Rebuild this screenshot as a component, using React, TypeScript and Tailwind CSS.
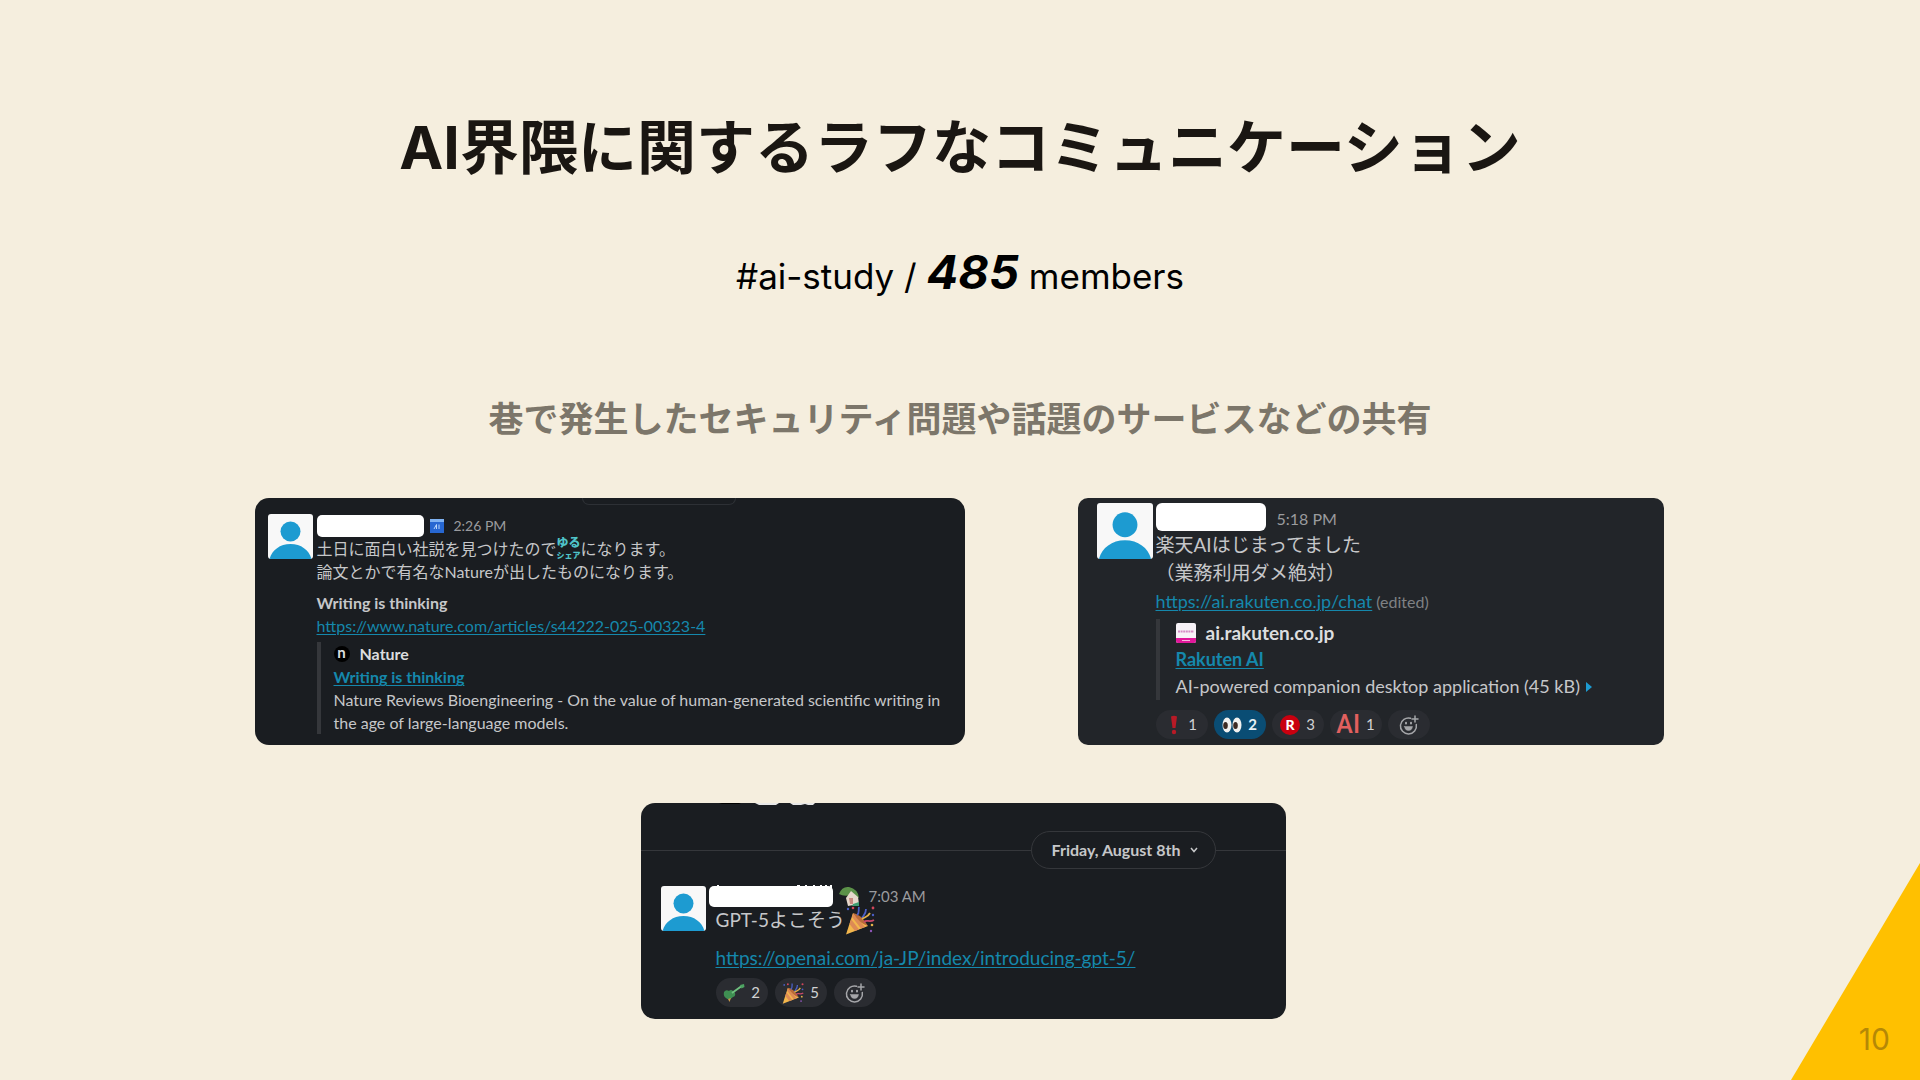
import { FC, ReactNode } from 'react';

const Avatar: FC<{ className: string }> = ({ className }) => (
  <svg viewBox="0 0 45 45" role="img" aria-label="User" className={`shrink-0 rounded-[3px] bg-[#f8f8f8] ${className}`}>
    <circle cx="22.5" cy="17.5" r="10" fill="#1d9bd1" />
    <path d="M1.5 45C4 36 12 30 22.500 30S41 36 43.500 45Z" fill="#1d9bd1" />
  </svg>
);

const PartyIcon: FC<{ className: string }> = ({ className }) => (
  <svg viewBox="0 0 30 30" aria-hidden="true" className={`shrink-0 ${className}`}>
    <path d="M8 8L23 21L1 29.500Z" fill="#f2b64c" />
    <path d="M6 14L14 24.500L10 26L4.500 19ZM8 8.500L20 22L16 23.500L7 12Z" fill="#dd8a55" />
    <path d="M8 8Q16 9 23 21Q15 19 8 8Z" fill="#b96a3a" />
    <path d="M12 10C15 8 13 5 14 2M17 13C19 10 21 9 21 4" stroke="#4a5fc4" strokeWidth="1.800" fill="none" />
    <path d="M19 17C22 14 24 18 29 15" stroke="#c9486a" strokeWidth="1.800" fill="none" />
    <path d="M17 14C20 12 23 12 25 8" stroke="#e2b04a" strokeWidth="1.800" fill="none" />
    <circle cx="8" cy="3" r="1.300" fill="#d2465b" />
    <circle cx="3" cy="4" r="1.200" fill="#4a5fc4" />
    <circle cx="28" cy="3" r="1.400" fill="#d2465b" />
    <circle cx="28" cy="10" r="1.200" fill="#4a5fc4" />
    <circle cx="27" cy="20" r="1.300" fill="#e2b04a" />
    <circle cx="26" cy="26" r="1.200" fill="#8e55b8" />
  </svg>
);

const AddReaction: FC = () => (
  <button aria-label="Add reaction" className="flex h-[29px] w-[42px] items-center justify-center rounded-full bg-[#2a2c31] text-[#a5a6a9]">
    <svg viewBox="0 0 20 20" className="size-5" fill="none" stroke="currentColor" strokeWidth="1.5" strokeLinecap="round">
      <path d="M11.500 3.200A8 8 0 1 0 17.300 9.500" />
      <path d="M16 1V7M13 4H19" />
      <path d="M5.500 11.500H13.500C13 14.500 11.500 15.500 9.500 15.500S6 14.500 5.500 11.500Z" fill="currentColor" strokeWidth="0.500" />
      <path d="M7 7.800V8.600M12 7.800V8.600" strokeWidth="2" />
    </svg>
  </button>
);

const Reaction: FC<{ label: string; count: number; active?: boolean; children: ReactNode }> = ({
  label,
  count,
  active,
  children,
}) => (
  <button
    aria-label={label}
    className={`flex h-[29px] w-[52px] items-center justify-center gap-1.5 rounded-full text-[15px] leading-none ${
      active ? 'bg-[#0a4d74] font-bold text-[#e8f0f5]' : 'bg-[#2a2c31] text-[#d1d2d3]'
    }`}
  >
    {children}
    <span>{count}</span>
  </button>
);

const link = 'text-[#1588ac] underline decoration-1 underline-offset-2';

const NatureCard: FC = () => (
  <article className="flex h-[247px] w-[710px] flex-col overflow-hidden rounded-[14px] bg-[#1a1d21] px-[13px] text-[16px] leading-[23px] text-[#c6c7c9]">
    <div className="ml-[314px] h-[7px] w-[154px] shrink-0 rounded-b-[20px] border border-t-0 border-[#2d3035]" />
    <div className="mt-[9px] flex gap-1">
      <Avatar className="size-[45px]" />
      <div>
        <div className="flex h-[23px] items-center">
          <div className="h-[22px] w-[107px] rounded-[5px] bg-white" />
          <svg viewBox="0 0 14 14" className="ml-1.5 size-3.5" aria-hidden="true">
            <rect width="14" height="14" fill="#2767d2" />
            <rect width="14" height="3" fill="#7fb2f2" />
            <path d="M4 10L6.500 5.500V10M9 5.500V10" stroke="#b9d6fb" fill="none" />
          </svg>
          <time className="ml-2.5 text-[14px] text-[#9a9b9e]">2:26 PM</time>
        </div>
        <p className="flex">
          土日に面白い社説を見つけたので
          <span className="flex h-[23px] flex-col items-center text-[12px] leading-[12px] font-black whitespace-nowrap text-[#4fc4c9]">
            <span>ゆる</span>
            <span className="text-[8px]">シェア</span>
          </span>
          になります。
        </p>
        <p>論文とかで有名なNatureが出したものになります。</p>
        <p className="mt-2 font-bold">Writing is thinking</p>
        <a href="https://www.nature.com/articles/s44222-025-00323-4" className={`block ${link}`}>
          https://www.nature.com/articles/s44222-025-00323-4
        </a>
        <blockquote className="mt-[5px] border-l-4 border-[#35373b] pl-[13px]">
          <div className="flex items-center gap-2.5 font-bold text-[#dcdddf]">
            <span className="flex size-4 items-center justify-center rounded-full bg-black pb-0.5 text-[15px]">n</span>
            Nature
          </div>
          <a href="#nature" className={`font-bold ${link}`}>
            Writing is thinking
          </a>
          <p>
            Nature Reviews Bioengineering - On the value of human-generated scientific writing in
            <br />
            the age of large-language models.
          </p>
        </blockquote>
      </div>
    </div>
  </article>
);

const RakutenCard: FC = () => (
  <article className="flex h-[247px] w-[586px] gap-[3px] overflow-hidden rounded-[10px] bg-[#222529] pt-[5px] pl-[19px] text-[19px] leading-[28px] text-[#c6c7c9]">
    <Avatar className="size-[56px]" />
    <div>
      <div className="flex h-[28px] items-center gap-[11px]">
        <div className="h-[28px] w-[110px] rounded-[6px] bg-white" />
        <time className="pt-1 text-[16px] text-[#9a9b9e]">5:18 PM</time>
      </div>
      <p>
        楽天AIはじまってました
        <br />
        （業務利用ダメ絶対）
      </p>
      <p className="text-[18px]">
        <a href="https://ai.rakuten.co.jp/chat" className={link}>
          https://ai.rakuten.co.jp/chat
        </a>
        <span className="ml-1 text-[16px] text-[#7f8184]">(edited)</span>
      </p>
      <blockquote className="mt-[3px] border-l-4 border-[#35373b] pl-[16px] text-[18px] leading-[27px]">
        <div className="flex items-center gap-2.5 text-[19px] font-bold text-[#dcdddf]">
          <svg viewBox="0 0 20 20" className="size-5" aria-hidden="true">
            <rect width="20" height="20" rx="2" fill="#f7f2f7" />
            <path d="M0 15H20V18Q20 20 18 20H2Q0 20 0 18Z" fill="#e0189a" />
            <path d="M2 8.500H18" stroke="#d58cc4" strokeWidth="2" strokeDasharray="2 0.600" />
            <path d="M6 17.500H14" stroke="#f7b5dd" />
          </svg>
          ai.rakuten.co.jp
        </div>
        <a href="#rakuten" className={`font-bold ${link}`}>
          Rakuten AI
        </a>
        <p className="flex items-center">
          AI-powered companion desktop application (45 kB)
          <svg viewBox="0 0 6 10" className="ml-1.5 h-2.5 w-1.5" aria-hidden="true">
            <path d="M0 0L6 5L0 10Z" fill="#1d9bd1" />
          </svg>
        </p>
      </blockquote>
      <div className="mt-[10px] flex gap-1.5">
        <Reaction label="Exclamation" count={1}>
          <svg viewBox="0 0 16 20" className="h-5 w-4" aria-hidden="true">
            <path d="M5 1.500Q8 0 11 1.500L9.500 13H6.500Z" fill="#b81a26" />
            <circle cx="8" cy="17" r="2.200" fill="#b81a26" />
          </svg>
        </Reaction>
        <Reaction label="Eyes" count={2} active>
          <svg viewBox="0 0 20 16" className="h-4 w-5" aria-hidden="true">
            <ellipse cx="5" cy="8" rx="4.500" ry="7.500" fill="#f1f1ef" />
            <ellipse cx="15" cy="8" rx="4.500" ry="7.500" fill="#f1f1ef" />
            <ellipse cx="3.500" cy="8.500" rx="2.300" ry="3.500" fill="#3c2a22" />
            <ellipse cx="13.500" cy="8.500" rx="2.300" ry="3.500" fill="#3c2a22" />
          </svg>
        </Reaction>
        <Reaction label="Rakuten" count={3}>
          <span className="flex size-5 items-center justify-center rounded-full bg-[#c9000f] text-[14px] font-black text-white">R</span>
        </Reaction>
        <Reaction label="AI" count={1}>
          <span className="font-['Roboto'] text-[25px] font-medium text-[#e2605f]">AI</span>
        </Reaction>
        <AddReaction />
      </div>
    </div>
  </article>
);

const GptCard: FC = () => (
  <article className="relative ml-2 h-[216px] w-[645px] overflow-hidden rounded-[14px] bg-[#1a1d21] text-[19px] text-[#c6c7c9]">
    {/* tail of the message scrolled above */}
    <svg viewBox="0 0 100 3" className="absolute top-0 left-[78px] h-[3px] w-[100px]" aria-hidden="true">
      <path d="M0 0H22L20 1H3Z" fill="#000" />
      <path d="M36 0H60L57 2H40ZM71 0H96L94 2H89L86 1L82 2H74Z" fill="#e8e8e8" />
    </svg>
    <div className="flex items-center pt-[28px]">
      <div className="h-px flex-1 bg-[#35373b]" />
      <button className="flex h-[38px] w-[185px] items-center justify-center gap-2.5 rounded-full border border-[#35373b] pl-1 text-[16px] font-bold">
        Friday, August 8th
        <svg viewBox="0 0 8 6" className="h-1.5 w-2" fill="none" stroke="currentColor" strokeWidth="1.500" aria-hidden="true">
          <path d="M1 1L4 4.500L7 1" />
        </svg>
      </button>
      <div className="h-px w-[70px] bg-[#35373b]" />
    </div>
    <div className="mt-[17px] flex pl-[20px]">
      <Avatar className="size-[45px]" />
      <div className="ml-[3px]">
        <div className="flex h-[20px] items-center">
          <svg viewBox="0 0 124 22" className="h-[22px] w-[124px] shrink-0" aria-hidden="true">
            <rect y="1" width="124" height="21" rx="5" fill="#fff" />
            <path d="M8 2V0H10V2ZM88 2V0H91V2ZM96 2V0H98V2ZM104 2V0H106V2ZM111 2V0H113V2ZM116 2V0H118V2ZM121 5V0H123V5Z" fill="#fff" />
          </svg>
          <svg viewBox="0 0 22 20" className="ml-1.5 h-5 w-[22px]" aria-hidden="true">
            <path d="M0 8Q3 0 10 1Q19 3 20 12L12 9Q5 11 0 8Z" fill="#5b9148" />
            <path d="M7 12L12 5L19 11L20 18L9 20Z" fill="#e6d8cb" />
            <path d="M10 12H14V18H11Z" fill="#c98a80" />
            <path d="M14 18L20 16V20H13Z" fill="#3f9d72" />
          </svg>
          <time className="ml-2 text-[15px] text-[#9a9b9e]">7:03 AM</time>
        </div>
        <div className="pl-[7px]">
          <p className="flex h-[28px] items-center">
            GPT-5よこそう
            <PartyIcon className="size-[30px]" />
          </p>
          <a href="https://openai.com/ja-JP/index/introducing-gpt-5/" className={`mt-[11px] block leading-[26px] ${link}`}>
            https://openai.com/ja-JP/index/introducing-gpt-5/
          </a>
          <div className="mt-[7px] flex gap-[7px]">
            <Reaction label="Guitar" count={2}>
              <svg viewBox="0 0 22 18" className="h-[18px] w-[22px]" aria-hidden="true">
                <path d="M1 8Q3 5 6 7Q8 5 10 7L12 9Q13 12 10 13Q6 17 3 14Q0 12 1 8Z" fill="#3f8f52" />
                <path d="M9 9L18 2.500" stroke="#6fbf7f" strokeWidth="2" />
                <path d="M17 1L21 0L21.500 3L18.500 4.500Z" fill="#4da562" />
                <path d="M5 15L8 14L6.500 18Z" fill="#c99a4a" />
              </svg>
            </Reaction>
            <Reaction label="Party" count={5}>
              <PartyIcon className="size-[22px]" />
            </Reaction>
            <AddReaction />
          </div>
        </div>
      </div>
    </div>
  </article>
);

const App: FC = () => (
  <main
    lang="ja"
    className="relative flex min-h-screen flex-col items-center overflow-hidden bg-[#f5eede] font-['Lato','Noto_Sans_CJK_JP',sans-serif]"
  >
    <h1 className="mt-[112px] font-['Inter','Noto_Sans_CJK_JP',sans-serif] text-[59px] leading-[72px] font-bold text-[#1a1612]">
      AI界隈に関するラフなコミュニケーション
    </h1>
    <p className="mt-[56px] font-['Inter',sans-serif] text-[35px] leading-[64px] text-black">
      #ai-study / <strong className="text-[47px] font-bold italic">485</strong> members
    </p>
    <h2 className="mt-[84px] text-[35px] leading-[52px] font-bold text-[#7c766a]">
      巷で発生したセキュリティ問題や話題のサービスなどの共有
    </h2>
    <div className="mt-[54px] flex flex-wrap justify-center gap-x-[113px] gap-y-[58px] pr-0.5">
      <NatureCard />
      <RakutenCard />
      <GptCard />
    </div>
    <svg viewBox="0 0 129 217" className="absolute right-0 bottom-0 h-[217px] w-[129px]" aria-hidden="true">
      <path d="M0 217L129 0V217Z" fill="#ffc000" />
    </svg>
    <span className="absolute right-[30px] bottom-[23px] font-['Inter',sans-serif] text-[30px] leading-[36px] text-[#b58806]">10</span>
  </main>
);

export default App;
